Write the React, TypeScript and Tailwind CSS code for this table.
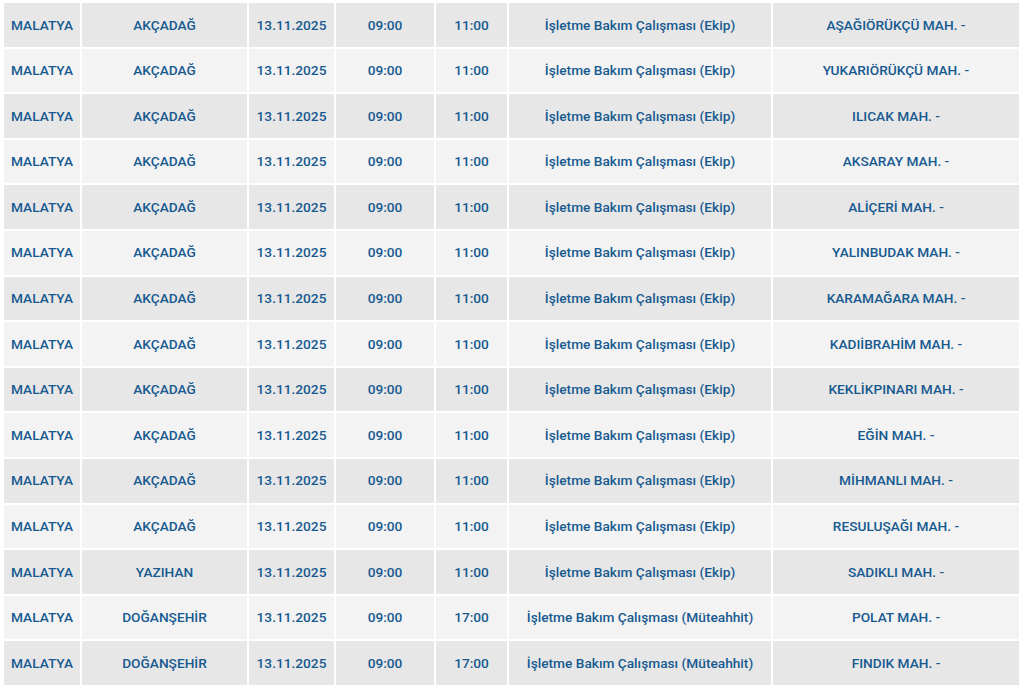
const rows: [string, string, string, string, string, string, string][] = [
  ['MALATYA', 'AKÇADAĞ', '13.11.2025', '09:00', '11:00', 'İşletme Bakım Çalışması (Ekip)', 'AŞAĞIÖRÜKÇÜ MAH. -'],
  ['MALATYA', 'AKÇADAĞ', '13.11.2025', '09:00', '11:00', 'İşletme Bakım Çalışması (Ekip)', 'YUKARIÖRÜKÇÜ MAH. -'],
  ['MALATYA', 'AKÇADAĞ', '13.11.2025', '09:00', '11:00', 'İşletme Bakım Çalışması (Ekip)', 'ILICAK MAH. -'],
  ['MALATYA', 'AKÇADAĞ', '13.11.2025', '09:00', '11:00', 'İşletme Bakım Çalışması (Ekip)', 'AKSARAY MAH. -'],
  ['MALATYA', 'AKÇADAĞ', '13.11.2025', '09:00', '11:00', 'İşletme Bakım Çalışması (Ekip)', 'ALİÇERİ MAH. -'],
  ['MALATYA', 'AKÇADAĞ', '13.11.2025', '09:00', '11:00', 'İşletme Bakım Çalışması (Ekip)', 'YALINBUDAK MAH. -'],
  ['MALATYA', 'AKÇADAĞ', '13.11.2025', '09:00', '11:00', 'İşletme Bakım Çalışması (Ekip)', 'KARAMAĞARA MAH. -'],
  ['MALATYA', 'AKÇADAĞ', '13.11.2025', '09:00', '11:00', 'İşletme Bakım Çalışması (Ekip)', 'KADIİBRAHİM MAH. -'],
  ['MALATYA', 'AKÇADAĞ', '13.11.2025', '09:00', '11:00', 'İşletme Bakım Çalışması (Ekip)', 'KEKLİKPINARI MAH. -'],
  ['MALATYA', 'AKÇADAĞ', '13.11.2025', '09:00', '11:00', 'İşletme Bakım Çalışması (Ekip)', 'EĞİN MAH. -'],
  ['MALATYA', 'AKÇADAĞ', '13.11.2025', '09:00', '11:00', 'İşletme Bakım Çalışması (Ekip)', 'MİHMANLI MAH. -'],
  ['MALATYA', 'AKÇADAĞ', '13.11.2025', '09:00', '11:00', 'İşletme Bakım Çalışması (Ekip)', 'RESULUŞAĞI MAH. -'],
  ['MALATYA', 'YAZIHAN', '13.11.2025', '09:00', '11:00', 'İşletme Bakım Çalışması (Ekip)', 'SADIKLI MAH. -'],
  ['MALATYA', 'DOĞANŞEHİR', '13.11.2025', '09:00', '17:00', 'İşletme Bakım Çalışması (Müteahhit)', 'POLAT MAH. -'],
  ['MALATYA', 'DOĞANŞEHİR', '13.11.2025', '09:00', '17:00', 'İşletme Bakım Çalışması (Müteahhit)', 'FINDIK MAH. -'],
]

const widths = ['w-[78px]', 'w-[167px]', 'w-[87px]', 'w-[100px]', 'w-[73px]', 'w-[264px]', 'w-[248px]']

export default function App() {
  return (
    <div className="min-h-[686px] bg-white pt-[1px] pl-[2px] font-['Roboto',sans-serif]">
      <table className="w-[1019px] table-fixed border-collapse text-[13.7px] font-medium text-[#175a90]">
        <colgroup>
          {widths.map((w, i) => (
            <col key={i} className={w} />
          ))}
        </colgroup>
        <tbody>
          {rows.map((row, i) => (
            <tr
              key={i}
              className={`h-[45.6px] ${i % 2 === 0 ? 'bg-[#e7e7e7]' : 'bg-[#f3f3f3]'}`}
            >
              {row.map((cell, j) => (
                <td
                  key={j}
                  className="border-2 border-white p-0 text-center whitespace-nowrap"
                >
                  {cell}
                </td>
              ))}
            </tr>
          ))}
        </tbody>
      </table>
    </div>
  )
}
